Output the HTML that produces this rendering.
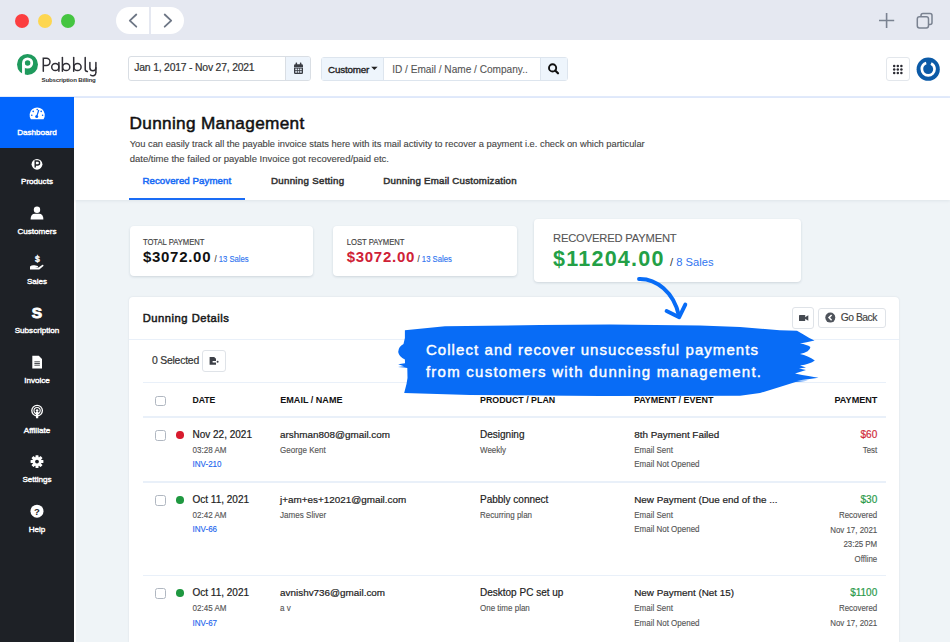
<!DOCTYPE html>
<html><head><meta charset="utf-8">
<style>
*{box-sizing:border-box;margin:0;padding:0}
html,body{width:950px;height:642px;overflow:hidden;background:#fff;font-family:"Liberation Sans",sans-serif;color:#222}
.a{position:absolute}
.t{position:absolute;line-height:1;white-space:nowrap}
svg{position:absolute;overflow:visible}
</style></head><body>

<div class="a" style="left:0px;top:0px;width:950px;height:40.6px;background:#e5e8f1"></div>
<div class="a" style="left:15px;top:13.5px;width:14px;height:14px;background:#fc3e40;border-radius:50%"></div>
<div class="a" style="left:38px;top:13.5px;width:14px;height:14px;background:#fdd650;border-radius:50%"></div>
<div class="a" style="left:61px;top:13.5px;width:14px;height:14px;background:#45c541;border-radius:50%"></div>
<div class="a" style="left:116px;top:7px;width:68px;height:27px;background:#fff;border-radius:13.5px"></div>
<div class="a" style="left:149px;top:7px;width:2px;height:27px;background:#e5e8f1"></div>
<svg style="left:0;top:0" width="950" height="40"><path d="M136.3 14.5 L129.8 20.6 L136.3 26.7" fill="none" stroke="#6d7685" stroke-width="1.8" stroke-linecap="round" stroke-linejoin="round"/><path d="M164.7 14.5 L171.2 20.6 L164.7 26.7" fill="none" stroke="#6d7685" stroke-width="1.8" stroke-linecap="round" stroke-linejoin="round"/><path d="M886.6 13 V28 M879 20.5 H894.2" stroke="#7a8291" stroke-width="1.6"/><rect x="917.3" y="16.8" width="11.2" height="11.2" rx="2.2" fill="none" stroke="#7a8291" stroke-width="1.5"/><path d="M921 16.8 V15.5 Q921 13.5 923 13.5 H930 Q932 13.5 932 15.5 V22.5 Q932 24.5 930 24.5 H928.5" fill="none" stroke="#7a8291" stroke-width="1.5"/></svg>
<div class="a" style="left:0px;top:40px;width:950px;height:57px;background:#fff"></div>
<div class="a" style="left:0px;top:96px;width:950px;height:2px;background:#e2ebfc"></div>
<svg style="left:0;top:0" width="120" height="97"><circle cx="27.5" cy="64.5" r="10.5" fill="#1f9a5d"/><circle cx="27.6" cy="63" r="4.15" fill="none" stroke="#fff" stroke-width="2.8"/><rect x="22.05" y="63" width="2.8" height="12" fill="#fff"/></svg>
<svg style="left:0;top:0" width="120" height="97"><g fill="none" stroke="#2f2e35" stroke-width="1.5" stroke-linecap="round"><path d="M43.3 71.3 V58.2 H46.4 A3.6 3.6 0 0 1 46.4 65.4 H43.3"/><circle cx="55.3" cy="67" r="3.6"/><path d="M58.9 62.6 V71.3"/><path d="M62.4 57.6 V71.3"/><circle cx="66.2" cy="67" r="3.6"/><path d="M73.7 57.6 V71.3"/><circle cx="77.5" cy="67" r="3.6"/><path d="M85.2 57.6 V69.6 Q85.2 71.4 87.4 71.6"/><path d="M89.9 62.6 V67.8 A3 3 0 0 0 95.9 67.8"/><path d="M95.9 62.6 V72.4 A3.2 3.2 0 0 1 90.6 75"/></g></svg>
<div class="t" style="left:41.60px;top:77.04px;font-size:6.1px;color:#333;font-weight:bold;letter-spacing:-0.18px;">Subscription Billing</div>
<div class="a" style="left:127.6px;top:56.2px;width:183.8px;height:24.9px;background:#fff;border:1px solid #d9dee4;border-radius:3px"></div>
<div class="a" style="left:285.4px;top:57.2px;width:24.9px;height:22.9px;background:#edf4fc;border-left:1px solid #d9dee4;border-radius:0 2px 2px 0"></div>
<div class="t" style="left:134.30px;top:62.60px;font-size:10.4px;color:#333;font-weight:normal;letter-spacing:-0.2px;-webkit-text-stroke-width:0.2px;">Jan 1, 2017 - Nov 27, 2021</div>
<svg style="left:0;top:0" width="320" height="97"><rect x="294" y="64.3" width="9" height="9.6" rx="1.2" fill="#3a3d44"/><rect x="295.6" y="62.6" width="1.5" height="2.6" rx="0.5" fill="#3a3d44"/><rect x="299.9" y="62.6" width="1.5" height="2.6" rx="0.5" fill="#3a3d44"/><rect x="294" y="67" width="9" height="0.6" fill="#c9d3de"/><g fill="#e8f0fa"><rect x="295.3" y="68.6" width="1.6" height="1.6"/><rect x="297.7" y="68.6" width="1.6" height="1.6"/><rect x="300.1" y="68.6" width="1.6" height="1.6"/><rect x="295.3" y="71.1" width="1.6" height="1.6"/><rect x="297.7" y="71.1" width="1.6" height="1.6"/><rect x="300.1" y="71.1" width="1.6" height="1.6"/></g></svg>
<div class="a" style="left:321px;top:56.8px;width:247px;height:24px;background:#fff;border:1px solid #dde5ee;border-radius:3px"></div>
<div class="a" style="left:322px;top:57.8px;width:62px;height:22px;background:#eef5fc;border-right:1px solid #dde5ee"></div>
<div class="a" style="left:540px;top:57.8px;width:27px;height:22px;background:#eef5fc;border-left:1px solid #dde5ee"></div>
<div class="t" style="left:328.10px;top:65.20px;font-size:9.8px;color:#222;font-weight:normal;letter-spacing:-0.2px;-webkit-text-stroke-width:0.35px;">Customer</div>
<svg style="left:0;top:0" width="600" height="97"><path d="M371.2 66.8 H377.6 L374.4 70 Z" fill="#222"/><circle cx="552.6" cy="67.9" r="3.6" fill="none" stroke="#111" stroke-width="1.9"/><path d="M555.2 70.5 L558 73.3" stroke="#111" stroke-width="2.2" stroke-linecap="round"/></svg>
<div class="t" style="left:392.20px;top:65.05px;font-size:10.1px;color:#555;font-weight:normal;-webkit-text-stroke-width:0.1px;">ID / Email / Name / Company..</div>
<div class="a" style="left:886.2px;top:57.1px;width:24px;height:24px;background:#fff;border:1px solid #e3e7ec;border-radius:3px"></div>
<svg style="left:0;top:0" width="950" height="97"><circle cx="894.2" cy="65.9" r="1.25" fill="#2b2b33"/><circle cx="894.2" cy="69.5" r="1.25" fill="#2b2b33"/><circle cx="894.2" cy="73.1" r="1.25" fill="#2b2b33"/><circle cx="897.8" cy="65.9" r="1.25" fill="#2b2b33"/><circle cx="897.8" cy="69.5" r="1.25" fill="#2b2b33"/><circle cx="897.8" cy="73.1" r="1.25" fill="#2b2b33"/><circle cx="901.4" cy="65.9" r="1.25" fill="#2b2b33"/><circle cx="901.4" cy="69.5" r="1.25" fill="#2b2b33"/><circle cx="901.4" cy="73.1" r="1.25" fill="#2b2b33"/><circle cx="928.2" cy="69.2" r="11.6" fill="#0b5aa7"/><circle cx="928.2" cy="69.1" r="6.35" fill="none" stroke="#fff" stroke-width="2.7" stroke-dasharray="33.9 6" stroke-dashoffset="-3" transform="rotate(-90 928.2 69.1)"/><rect x="926.8" y="61.6" width="3" height="7.5" fill="#0b5aa7"/></svg>
<div class="a" style="left:0px;top:97px;width:74px;height:545px;background:#1e2126"></div>
<div class="a" style="left:0px;top:97px;width:74px;height:51px;background:#0265fd"></div>
<div class="t" style="left:-63.00px;width:200px;text-align:center;top:128.64px;font-size:8.1px;color:#fff;font-weight:normal;-webkit-text-stroke-width:0.4px;">Dashboard</div>
<div class="t" style="left:-63.00px;width:200px;text-align:center;top:178.32px;font-size:8.1px;color:#fff;font-weight:normal;-webkit-text-stroke-width:0.4px;">Products</div>
<div class="t" style="left:-63.00px;width:200px;text-align:center;top:228.00px;font-size:8.1px;color:#fff;font-weight:normal;-webkit-text-stroke-width:0.4px;">Customers</div>
<div class="t" style="left:-63.00px;width:200px;text-align:center;top:277.68px;font-size:8.1px;color:#fff;font-weight:normal;-webkit-text-stroke-width:0.4px;">Sales</div>
<div class="t" style="left:-63.00px;width:200px;text-align:center;top:327.36px;font-size:8.1px;color:#fff;font-weight:normal;-webkit-text-stroke-width:0.4px;">Subscription</div>
<div class="t" style="left:-63.00px;width:200px;text-align:center;top:377.04px;font-size:8.1px;color:#fff;font-weight:normal;-webkit-text-stroke-width:0.4px;">Invoice</div>
<div class="t" style="left:-63.00px;width:200px;text-align:center;top:426.72px;font-size:8.1px;color:#fff;font-weight:normal;-webkit-text-stroke-width:0.4px;">Affiliate</div>
<div class="t" style="left:-63.00px;width:200px;text-align:center;top:476.40px;font-size:8.1px;color:#fff;font-weight:normal;-webkit-text-stroke-width:0.4px;">Settings</div>
<div class="t" style="left:-63.00px;width:200px;text-align:center;top:526.08px;font-size:8.1px;color:#fff;font-weight:normal;-webkit-text-stroke-width:0.4px;">Help</div>
<svg style="left:0;top:0" width="74" height="642" fill="#fff"><path d="M30.87 119.2 A7.6 7.6 0 1 1 43.53 119.2 Z"/><g fill="#0265fd"><circle cx="33.2" cy="111.4" r="0.8"/><circle cx="37.2" cy="109.6" r="0.8"/><circle cx="41.2" cy="111.4" r="0.8"/><circle cx="31.8" cy="115.3" r="0.8"/><circle cx="42.6" cy="115.3" r="0.8"/><circle cx="36.7" cy="116.6" r="1.5"/></g><path d="M36.7 116.6 L38.8 110" stroke="#0265fd" stroke-width="1.2"/><circle cx="37" cy="164.3" r="5.4"/><path d="M35.2 167.6 V161 H37.6 Q39.6 161 39.6 163 Q39.6 165 37.6 165 H35.2" fill="none" stroke="#1e2126" stroke-width="1.4"/><circle cx="37" cy="209.8" r="3.2"/><path d="M30.6 219.6 Q30.6 213.8 35 213.8 H39 Q43.4 213.8 43.4 219.6 Z"/><text x="37.4" y="262.2" font-size="8.6" font-weight="bold" text-anchor="middle" font-family="Liberation Sans" stroke="#fff" stroke-width="0.35">$</text><path d="M30 266.5 Q32 264.8 34.5 265.3 L37.8 266 Q38.6 266.4 37.8 267.1 L35 267.2 L38.5 267.6 L42.5 264.8 Q43.8 264.6 43.4 265.9 L39.3 269.6 H30 Z"/><text x="37" y="317.6" font-size="15.5" font-weight="bold" text-anchor="middle" font-family="Liberation Sans" stroke="#fff" stroke-width="0.9">S</text><path d="M32.3 355.7 H38.8 L42 358.9 V368.5 H32.3 Z"/><path d="M34.4 361.8 H39.9 M34.4 363.5 H39.9 M34.4 365.2 H39.9" stroke="#1e2126" stroke-width="0.8"/><circle cx="37.1" cy="410.6" r="5.3" fill="none" stroke="#fff" stroke-width="1.3"/><circle cx="37.1" cy="410.6" r="3.1" fill="none" stroke="#fff" stroke-width="1.1"/><circle cx="37.1" cy="410.6" r="1.3"/><path d="M35.6 412 H38.6 L38.2 418.3 H36 Z"/><g transform="translate(37 461.6)"><rect x="-1.5" y="-6.4" width="3" height="3.2" rx="0.5" transform="rotate(0)"/><rect x="-1.5" y="-6.4" width="3" height="3.2" rx="0.5" transform="rotate(45)"/><rect x="-1.5" y="-6.4" width="3" height="3.2" rx="0.5" transform="rotate(90)"/><rect x="-1.5" y="-6.4" width="3" height="3.2" rx="0.5" transform="rotate(135)"/><rect x="-1.5" y="-6.4" width="3" height="3.2" rx="0.5" transform="rotate(180)"/><rect x="-1.5" y="-6.4" width="3" height="3.2" rx="0.5" transform="rotate(225)"/><rect x="-1.5" y="-6.4" width="3" height="3.2" rx="0.5" transform="rotate(270)"/><rect x="-1.5" y="-6.4" width="3" height="3.2" rx="0.5" transform="rotate(315)"/><circle r="4.6"/><circle r="1.9" fill="#1e2126"/></g><circle cx="37" cy="511.2" r="6.5"/><text x="37" y="514.6" font-size="9.5" font-weight="bold" text-anchor="middle" font-family="Liberation Sans" fill="#1e2126">?</text></svg>
<div class="a" style="left:74px;top:97.5px;width:876px;height:544.5px;background:#eff4f7;border-left:2px solid #fff"></div>
<div class="a" style="left:74px;top:97.5px;width:876px;height:102.7px;background:#fff;box-shadow:0 1px 3px rgba(30,50,80,.08)"></div>
<div class="t" style="left:129.50px;top:115.04px;font-size:17.2px;color:#111;font-weight:normal;letter-spacing:0.33px;-webkit-text-stroke-width:0.5px;">Dunning Management</div>
<div class="t" style="left:129.70px;top:140.40px;font-size:9.33px;color:#454545;font-weight:normal;-webkit-text-stroke-width:0.12px;">You can easily track all the payable invoice stats here with its mail activity to recover a payment i.e. check on which particular</div>
<div class="t" style="left:129.70px;top:153.86px;font-size:9.5px;color:#454545;font-weight:normal;-webkit-text-stroke-width:0.12px;">date/time the failed or payable Invoice got recovered/paid etc.</div>
<div class="t" style="left:142.40px;top:176.19px;font-size:9.7px;color:#1a6cf5;font-weight:normal;letter-spacing:0.06px;-webkit-text-stroke-width:0.5px;">Recovered Payment</div>
<div class="t" style="left:271.00px;top:176.19px;font-size:9.7px;color:#333;font-weight:normal;letter-spacing:0.3px;-webkit-text-stroke-width:0.5px;">Dunning Setting</div>
<div class="t" style="left:383.30px;top:176.19px;font-size:9.7px;color:#333;font-weight:normal;letter-spacing:0.24px;-webkit-text-stroke-width:0.5px;">Dunning Email Customization</div>
<div class="a" style="left:129.2px;top:198.4px;width:115.5px;height:2.1px;background:#1a6cf5"></div>
<div class="a" style="left:130.3px;top:226.3px;width:182.7px;height:49.5px;background:#fff;border-radius:4px;box-shadow:0 1px 2.5px rgba(40,60,90,.16)"></div>
<div class="a" style="left:333.4px;top:226.3px;width:183.6px;height:49.5px;background:#fff;border-radius:4px;box-shadow:0 1px 2.5px rgba(40,60,90,.16)"></div>
<div class="a" style="left:534.2px;top:219.2px;width:267.1px;height:63.1px;background:#fff;border-radius:4px;box-shadow:0 1px 2.5px rgba(40,60,90,.16)"></div>
<div class="t" style="left:142.90px;top:238.92px;font-size:7.65px;color:#444;font-weight:normal;-webkit-text-stroke-width:0.15px;transform:scaleY(1.08);transform-origin:0 6.48px;">TOTAL PAYMENT</div>
<div class="t" style="left:142.90px;top:249.00px;font-size:15px;color:#111;font-weight:bold;letter-spacing:0.72px;">$3072.00</div>
<div class="t" style="left:214.50px;top:255.78px;font-size:7.7px;color:#2f74f0;font-weight:normal;-webkit-text-stroke-width:0.12px;transform:scaleY(1.12);transform-origin:0 6.52px;"><span style="color:#333">/</span> 13 Sales</div>
<div class="t" style="left:346.70px;top:238.92px;font-size:7.65px;color:#444;font-weight:normal;-webkit-text-stroke-width:0.15px;transform:scaleY(1.08);transform-origin:0 6.48px;">LOST PAYMENT</div>
<div class="t" style="left:346.70px;top:249.00px;font-size:15px;color:#cf2136;font-weight:bold;letter-spacing:0.72px;">$3072.00</div>
<div class="t" style="left:417.60px;top:255.78px;font-size:7.7px;color:#2f74f0;font-weight:normal;-webkit-text-stroke-width:0.12px;transform:scaleY(1.12);transform-origin:0 6.52px;"><span style="color:#333">/</span> 13 Sales</div>
<div class="t" style="left:553.00px;top:233.12px;font-size:11.2px;color:#555;font-weight:normal;letter-spacing:-0.17px;-webkit-text-stroke-width:0.1px;">RECOVERED PAYMENT</div>
<div class="t" style="left:553.00px;top:248.50px;font-size:21.5px;color:#23a046;font-weight:bold;letter-spacing:1.25px;">$11204.00</div>
<div class="t" style="left:670.00px;top:257.22px;font-size:11.2px;color:#2f74f0;font-weight:normal;"><span style="color:#333">/</span> 8 Sales</div>
<div class="a" style="left:129.2px;top:297.1px;width:769.8px;height:345px;background:#fff;border-radius:4px 4px 0 0;box-shadow:0 0 2px rgba(40,60,90,.12)"></div>
<div class="t" style="left:142.70px;top:312.72px;font-size:11.2px;color:#1a1a1a;font-weight:normal;letter-spacing:0.52px;-webkit-text-stroke-width:0.5px;">Dunning Details</div>
<div class="a" style="left:129.2px;top:339.2px;width:769.8px;height:1.3px;background:#e9f0f9"></div>
<div class="a" style="left:792.2px;top:307.1px;width:22.3px;height:22.1px;background:#fff;border:1px solid #dfe3e8;border-radius:3px"></div>
<div class="a" style="left:818.2px;top:308px;width:67.8px;height:19.7px;background:#fff;border:1px solid #dfe3e8;border-radius:3px"></div>
<svg style="left:0;top:0" width="950" height="642"><rect x="799" y="315" width="6.2" height="6" rx="0.6" fill="#454a52"/><path d="M805 317.2 L808.3 315.2 V320.8 L805 318.8 Z" fill="#454a52"/><circle cx="830.3" cy="317.6" r="5" fill="#4f545c"/><path d="M831.6 315 L829 317.6 L831.6 320.2" fill="none" stroke="#fff" stroke-width="1.5"/></svg>
<div class="t" style="left:840.80px;top:312.88px;font-size:10.3px;color:#444;font-weight:normal;letter-spacing:-0.48px;-webkit-text-stroke-width:0.15px;">Go Back</div>
<div class="t" style="left:151.90px;top:355.60px;font-size:10.4px;color:#333;font-weight:normal;letter-spacing:-0.2px;-webkit-text-stroke-width:0.2px;">0 Selected</div>
<div class="a" style="left:202.2px;top:350.2px;width:23.5px;height:22.3px;background:#fff;border:1px solid #dfe3e8;border-radius:3px"></div>
<svg style="left:0;top:0" width="950" height="642"><path d="M209.6 357 H214.2 L216 358.8 V364.8 H209.6 Z" fill="#3d4047"/><rect x="212.6" y="361" width="4" height="1.5" fill="#fff"/><circle cx="217.6" cy="361.8" r="1" fill="#3d4047"/></svg>
<div class="a" style="left:142.5px;top:382.3px;width:743px;height:1.2px;background:#e9f0f9"></div>
<div class="a" style="left:142.5px;top:416.4px;width:743px;height:1.2px;background:#e9f0f9"></div>
<div class="a" style="left:154.6px;top:395.5px;width:11px;height:10.8px;background:#fff;border:1px solid #b0b7c1;border-radius:2.5px"></div>
<div class="t" style="left:192.40px;top:395.84px;font-size:8.7px;color:#111;font-weight:bold;">DATE</div>
<div class="t" style="left:280.30px;top:395.54px;font-size:9.05px;color:#111;font-weight:bold;">EMAIL / NAME</div>
<div class="t" style="left:480.00px;top:395.71px;font-size:8.85px;color:#111;font-weight:bold;">PRODUCT / PLAN</div>
<div class="t" style="left:633.90px;top:395.62px;font-size:8.95px;color:#111;font-weight:bold;">PAYMENT / EVENT</div>
<div class="t" style="right:72.60px;top:395.50px;font-size:9.1px;color:#111;font-weight:bold;">PAYMENT</div>
<div class="a" style="left:154.6px;top:430.2px;width:11px;height:10.8px;background:#fff;border:1px solid #b0b7c1;border-radius:2.5px"></div>
<div class="a" style="left:176.4px;top:431.1px;width:7.6px;height:7.6px;background:#d81b2e;border-radius:50%"></div>
<div class="t" style="left:192.50px;top:429.84px;font-size:10px;color:#222;font-weight:normal;-webkit-text-stroke-width:0.2px;">Nov 22, 2021</div>
<div class="t" style="left:192.50px;top:446.59px;font-size:8.05px;color:#555;font-weight:normal;-webkit-text-stroke-width:0.12px;transform:scaleY(1.13);transform-origin:0 6.81px;">03:28 AM</div>
<div class="t" style="left:192.50px;top:461.19px;font-size:8.05px;color:#2466ee;font-weight:normal;-webkit-text-stroke-width:0.12px;transform:scaleY(1.13);transform-origin:0 6.81px;">INV-210</div>
<div class="t" style="left:280.10px;top:429.92px;font-size:9.9px;color:#222;font-weight:normal;-webkit-text-stroke-width:0.2px;">arshman808@gmail.com</div>
<div class="t" style="left:280.10px;top:446.59px;font-size:8.05px;color:#555;font-weight:normal;-webkit-text-stroke-width:0.12px;transform:scaleY(1.13);transform-origin:0 6.81px;">George Kent</div>
<div class="t" style="left:480.00px;top:429.84px;font-size:10px;color:#222;font-weight:normal;-webkit-text-stroke-width:0.2px;">Designing</div>
<div class="t" style="left:480.00px;top:446.63px;font-size:8px;color:#555;font-weight:normal;-webkit-text-stroke-width:0.12px;transform:scaleY(1.13);transform-origin:0 6.77px;">Weekly</div>
<div class="t" style="left:634.20px;top:429.92px;font-size:9.9px;color:#222;font-weight:normal;-webkit-text-stroke-width:0.2px;">8th Payment Failed</div>
<div class="t" style="left:634.20px;top:446.83px;font-size:8px;color:#555;font-weight:normal;-webkit-text-stroke-width:0.12px;transform:scaleY(1.13);transform-origin:0 6.77px;">Email Sent</div>
<div class="t" style="left:634.20px;top:461.33px;font-size:8px;color:#555;font-weight:normal;-webkit-text-stroke-width:0.12px;transform:scaleY(1.13);transform-origin:0 6.77px;">Email Not Opened</div>
<div class="t" style="right:72.80px;top:429.84px;font-size:10px;color:#d02b3a;font-weight:normal;-webkit-text-stroke-width:0.2px;">$60</div>
<div class="t" style="right:72.80px;top:446.91px;font-size:7.9px;color:#555;font-weight:normal;-webkit-text-stroke-width:0.12px;transform:scaleY(1.13);transform-origin:0 6.69px;">Test</div>
<div class="a" style="left:154.6px;top:495.2px;width:11px;height:10.8px;background:#fff;border:1px solid #b0b7c1;border-radius:2.5px"></div>
<div class="a" style="left:176.4px;top:496.1px;width:7.6px;height:7.6px;background:#1f9840;border-radius:50%"></div>
<div class="t" style="left:192.50px;top:494.84px;font-size:10px;color:#222;font-weight:normal;-webkit-text-stroke-width:0.2px;">Oct 11, 2021</div>
<div class="t" style="left:192.50px;top:511.59px;font-size:8.05px;color:#555;font-weight:normal;-webkit-text-stroke-width:0.12px;transform:scaleY(1.13);transform-origin:0 6.81px;">02:42 AM</div>
<div class="t" style="left:192.50px;top:526.19px;font-size:8.05px;color:#2466ee;font-weight:normal;-webkit-text-stroke-width:0.12px;transform:scaleY(1.13);transform-origin:0 6.81px;">INV-66</div>
<div class="t" style="left:280.10px;top:494.92px;font-size:9.9px;color:#222;font-weight:normal;-webkit-text-stroke-width:0.2px;">j+am+es+12021@gmail.com</div>
<div class="t" style="left:280.10px;top:511.59px;font-size:8.05px;color:#555;font-weight:normal;-webkit-text-stroke-width:0.12px;transform:scaleY(1.13);transform-origin:0 6.81px;">James Sliver</div>
<div class="t" style="left:480.00px;top:494.84px;font-size:10px;color:#222;font-weight:normal;-webkit-text-stroke-width:0.2px;">Pabbly connect</div>
<div class="t" style="left:480.00px;top:511.63px;font-size:8px;color:#555;font-weight:normal;-webkit-text-stroke-width:0.12px;transform:scaleY(1.13);transform-origin:0 6.77px;">Recurring plan</div>
<div class="t" style="left:634.20px;top:494.92px;font-size:9.9px;color:#222;font-weight:normal;-webkit-text-stroke-width:0.2px;">New Payment (Due end of the ...</div>
<div class="t" style="left:634.20px;top:511.83px;font-size:8px;color:#555;font-weight:normal;-webkit-text-stroke-width:0.12px;transform:scaleY(1.13);transform-origin:0 6.77px;">Email Sent</div>
<div class="t" style="left:634.20px;top:526.33px;font-size:8px;color:#555;font-weight:normal;-webkit-text-stroke-width:0.12px;transform:scaleY(1.13);transform-origin:0 6.77px;">Email Not Opened</div>
<div class="t" style="right:72.80px;top:494.84px;font-size:10px;color:#2a9a4a;font-weight:normal;-webkit-text-stroke-width:0.2px;">$30</div>
<div class="t" style="right:72.80px;top:511.91px;font-size:7.9px;color:#555;font-weight:normal;-webkit-text-stroke-width:0.12px;transform:scaleY(1.13);transform-origin:0 6.69px;">Recovered</div>
<div class="t" style="right:72.80px;top:526.61px;font-size:7.9px;color:#555;font-weight:normal;-webkit-text-stroke-width:0.12px;transform:scaleY(1.13);transform-origin:0 6.69px;">Nov 17, 2021</div>
<div class="t" style="right:72.80px;top:541.31px;font-size:7.9px;color:#555;font-weight:normal;-webkit-text-stroke-width:0.12px;transform:scaleY(1.13);transform-origin:0 6.69px;">23:25 PM</div>
<div class="t" style="right:72.80px;top:556.01px;font-size:7.9px;color:#555;font-weight:normal;-webkit-text-stroke-width:0.12px;transform:scaleY(1.13);transform-origin:0 6.69px;">Offline</div>
<div class="a" style="left:154.6px;top:588.2px;width:11px;height:10.8px;background:#fff;border:1px solid #b0b7c1;border-radius:2.5px"></div>
<div class="a" style="left:176.4px;top:589.1px;width:7.6px;height:7.6px;background:#1f9840;border-radius:50%"></div>
<div class="t" style="left:192.50px;top:588.33px;font-size:10px;color:#222;font-weight:normal;-webkit-text-stroke-width:0.2px;">Oct 11, 2021</div>
<div class="t" style="left:192.50px;top:605.09px;font-size:8.05px;color:#555;font-weight:normal;-webkit-text-stroke-width:0.12px;transform:scaleY(1.13);transform-origin:0 6.81px;">02:45 AM</div>
<div class="t" style="left:192.50px;top:619.69px;font-size:8.05px;color:#2466ee;font-weight:normal;-webkit-text-stroke-width:0.12px;transform:scaleY(1.13);transform-origin:0 6.81px;">INV-67</div>
<div class="t" style="left:280.10px;top:588.42px;font-size:9.9px;color:#222;font-weight:normal;-webkit-text-stroke-width:0.2px;">avnishv736@gmail.com</div>
<div class="t" style="left:280.10px;top:605.09px;font-size:8.05px;color:#555;font-weight:normal;-webkit-text-stroke-width:0.12px;transform:scaleY(1.13);transform-origin:0 6.81px;">a v</div>
<div class="t" style="left:480.00px;top:588.33px;font-size:10px;color:#222;font-weight:normal;-webkit-text-stroke-width:0.2px;">Desktop PC set up</div>
<div class="t" style="left:480.00px;top:605.13px;font-size:8px;color:#555;font-weight:normal;-webkit-text-stroke-width:0.12px;transform:scaleY(1.13);transform-origin:0 6.77px;">One time plan</div>
<div class="t" style="left:634.20px;top:588.42px;font-size:9.9px;color:#222;font-weight:normal;-webkit-text-stroke-width:0.2px;">New Payment (Net 15)</div>
<div class="t" style="left:634.20px;top:605.33px;font-size:8px;color:#555;font-weight:normal;-webkit-text-stroke-width:0.12px;transform:scaleY(1.13);transform-origin:0 6.77px;">Email Sent</div>
<div class="t" style="left:634.20px;top:619.83px;font-size:8px;color:#555;font-weight:normal;-webkit-text-stroke-width:0.12px;transform:scaleY(1.13);transform-origin:0 6.77px;">Email Not Opened</div>
<div class="t" style="right:72.80px;top:588.33px;font-size:10px;color:#2a9a4a;font-weight:normal;-webkit-text-stroke-width:0.2px;">$1100</div>
<div class="t" style="right:72.80px;top:605.41px;font-size:7.9px;color:#555;font-weight:normal;-webkit-text-stroke-width:0.12px;transform:scaleY(1.13);transform-origin:0 6.69px;">Recovered</div>
<div class="t" style="right:72.80px;top:620.11px;font-size:7.9px;color:#555;font-weight:normal;-webkit-text-stroke-width:0.12px;transform:scaleY(1.13);transform-origin:0 6.69px;">Nov 17, 2021</div>
<div class="a" style="left:142.5px;top:481.4px;width:743px;height:1.2px;background:#e9f0f9"></div>
<div class="a" style="left:142.5px;top:574.6px;width:743px;height:1.2px;background:#e9f0f9"></div>
<svg style="left:0;top:0" width="950" height="642"><path fill="#086cf6" d="M404.9 330.2 L445 326.3 L540 325 L610 324.5 L700 325.5 L740 326.9 L779.7 330.2 L797 330.8 L803.5 334.5 Q808 337.5 814.5 340.6 Q806 342.5 800 343.5 Q807 344.5 810.4 347 Q810 352 800 354 Q808 355.5 814.8 360.5 Q810 364 800 365.5 L806 367.5 L799 368.5 L806 370 L795 373.5 Q810 376.5 818.5 377.8 Q808 379.5 797 380.6 L808 380.8 L795.6 382 L779.7 387.1 L760 393 L740 395.7 L600 396 L470 395 L404.2 393.1 L406.5 384 L407.5 378 L407.3 368 L404 367.5 L398 367 L404 366.2 L398.2 364.3 L405 363.3 L404.9 359.4 Q399 357 398.2 352 Q398.5 346.5 403.5 344.1 L404.9 338 Z"/><path fill="none" stroke="#086cf6" stroke-width="3.9" stroke-linecap="round" d="M639 279 C656 278.5 674 292 679 316"/><path fill="none" stroke="#086cf6" stroke-width="3.9" stroke-linecap="round" stroke-linejoin="round" d="M666.6 311.1 L679.2 317.2 L685.3 304.6"/></svg>
<div class="t" style="left:425.90px;top:342.20px;font-size:15px;color:#fff;font-weight:normal;letter-spacing:1.07px;-webkit-text-stroke-width:0.42px;">Collect and recover unsuccessful payments</div>
<div class="t" style="left:425.90px;top:363.90px;font-size:15px;color:#fff;font-weight:normal;letter-spacing:1.25px;-webkit-text-stroke-width:0.42px;">from customers with dunning management.</div>
</body></html>
